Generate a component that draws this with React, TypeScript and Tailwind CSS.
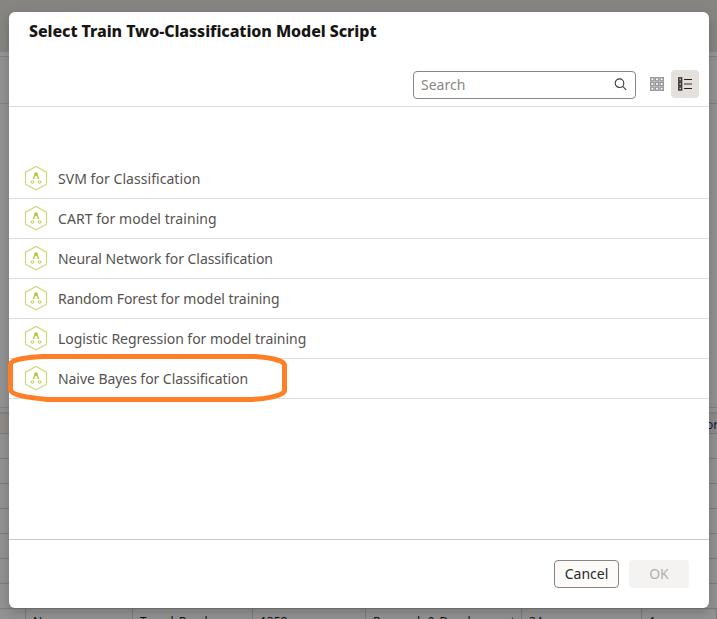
import React from "react";

const scripts = [
  { name: "SVM for Classification", spacing: "tracking-[0.05px]" },
  { name: "CART for model training", spacing: "tracking-[0.05px]" },
  { name: "Neural Network for Classification", spacing: "tracking-[-0.05px]" },
  { name: "Random Forest for model training", spacing: "tracking-[-0.05px]" },
  { name: "Logistic Regression for model training", spacing: "tracking-[-0.04px]" },
  { name: "Naive Bayes for Classification", spacing: "tracking-[-0.06px]" },
];

const gridRows = ["a", "b", "c", "d", "e", "f", "g"];

function ModelIcon() {
  return (
    <svg width="24" height="26" viewBox="0 0 24 26" fill="none" className="-mt-px shrink-0">
      <path d="M12 1.5 22.5 7.2V19.2L12 24.9 1.5 19.2V7.2Z" stroke="#c9db78" strokeWidth="1.2" />
      <path d="M11.2 10 9.2 14M12.8 10l2 4" stroke="#b5cf4b" strokeWidth="1.5" />
      <circle cx="12" cy="9.2" r="1.9" fill="#b0cc3c" />
      <circle cx="8.5" cy="17" r="1.3" stroke="#b5cf4b" />
      <circle cx="15.5" cy="17" r="1.3" stroke="#b5cf4b" />
      <path d="M12 13v1M12 16.5v1" stroke="#d5e49a" />
    </svg>
  );
}

function GridIcon() {
  return (
    <svg width="14" height="14" viewBox="0 0 14 14" fill="none" stroke="#98969a" strokeWidth="1.4">
      {[0.7, 5.4, 10.1].map((y) =>
        [0.7, 5.4, 10.1].map((x) => <rect key={`${x}-${y}`} x={x} y={y} width="3.2" height="3.2" />)
      )}
    </svg>
  );
}

function ListIcon() {
  return (
    <svg width="14" height="14" viewBox="0 0 14 14" fill="none" stroke="#3a3836" strokeWidth="1.5">
      {[0.9, 5.4, 9.9].map((y) => (
        <rect key={y} x="0.8" y={y} width="2.8" height="3.1" />
      ))}
      <path d="M6 2.5h8M6 11.5h8" stroke="#22201f" strokeWidth="1" />
      <path d="M6 7h8" stroke="#8a8784" strokeWidth="2" />
    </svg>
  );
}

function Backdrop() {
  return (
    <div className="flex h-[619px] w-full flex-col bg-[#929292] text-[12px] text-[#151515]">
      <div className="h-[52px] shrink-0 bg-[#878582]" />
      <div className="h-[5px] shrink-0 border-b border-[#7f7f7f] bg-[#969698]" />
      <div className="h-[47px] shrink-0 border-b border-[#808080]" />
      <div className="h-[304px] shrink-0 border-b border-[#808080]" />
      <div className="h-[4px] shrink-0" />
      <div className="h-[2px] shrink-0 bg-[#7e8186]" />
      <div className="flex h-[20px] shrink-0 items-center justify-end overflow-hidden border-b border-[#7d7d7d] bg-[#8e8b88] leading-none">
        <span className="w-[11px] whitespace-nowrap pt-[3px] text-[#0c1440]">or</span>
      </div>
      {gridRows.map((row) => (
        <div key={row} className="h-[25px] shrink-0 border-b border-[#7d7d7d]" />
      ))}
      <div className="flex h-[10px] shrink-0 overflow-hidden leading-[14px] *:shrink-0 *:overflow-hidden *:whitespace-nowrap *:border-r *:border-[#7a7a7a] *:pl-[7px] *:pt-[6px]">
        <span className="w-[26px]" />
        <span className="w-[107px]">Non</span>
        <span className="w-[120px]">Travel_Rarely</span>
        <span className="w-[113px]">1358</span>
        <span className="w-[156px]">Research &amp; Development</span>
        <span className="w-[120px]">24</span>
        <span className="w-[75px]">1</span>
      </div>
    </div>
  );
}

export default function App() {
  return (
    <div className="relative h-[619px] w-[717px] overflow-hidden font-['Noto_Sans','Open_Sans',sans-serif]">
      <Backdrop />
      <section
        role="dialog"
        className="absolute left-[9px] top-[12px] flex h-[596px] w-[700px] flex-col rounded-[6px] bg-white shadow-[0_4px_12px_rgba(0,0,0,0.2)]"
      >
        <header className="flex h-[95px] shrink-0 flex-col border-b border-[#dedede]">
          <h1 className="h-[58px] whitespace-nowrap pl-5 pt-[7px] text-[16px] font-extrabold leading-6 tracking-[-0.07px] text-[#161513]">
            Select Train Two-Classification Model Script
          </h1>
          <div className="flex items-start justify-end pr-[10px]">
            <label className="mr-[7px] mt-px flex h-7 w-[223px] items-center justify-between rounded-[4px] border border-[#8b8580] pl-[7px] pr-2">
              <span className="-mt-px text-[14px] text-[#8b8683]">Search</span>
              <svg width="13" height="13" viewBox="0 0 13 13" fill="none" stroke="#3b3937" strokeWidth="1.1" className="-mt-[2px]">
                <circle cx="5.5" cy="5.2" r="4.3" />
                <path d="m8.7 8.3 3.5 3.5" />
              </svg>
            </label>
            <div className="flex size-7 items-center justify-center">
              <GridIcon />
            </div>
            <div className="flex size-7 items-center justify-center rounded-[4px] bg-[#e4e1dd]">
              <ListIcon />
            </div>
          </div>
        </header>
        <main className="flex-1 pt-[52px]">
          <ul>
            {scripts.map((script) => (
              <li key={script.name} className="flex h-10 items-center border-b border-[#dedede] pl-[15px]">
                <ModelIcon />
                <span className={`ml-[10px] whitespace-nowrap text-[14px] text-[#55524f] ${script.spacing}`}>{script.name}</span>
              </li>
            ))}
          </ul>
        </main>
        <footer className="flex h-[69px] shrink-0 items-start justify-end gap-[10px] border-t border-[#cacaca] pr-5 pt-5 text-[14px] leading-[26px]">
          <button className="h-7 w-[65px] rounded-[4px] border border-[#8b8580] bg-[#fcfbfa] text-[#2b2927]">Cancel</button>
          <button className="h-7 w-[60px] rounded-[4px] bg-[#f4f3f2] text-[#b1afad]">OK</button>
        </footer>
      </section>
      <svg
        width="282"
        height="50"
        viewBox="0 0 282 50"
        fill="none"
        stroke="#ff7f27"
        strokeWidth="5"
        className="absolute left-[7px] top-[353px]"
      >
        <path d="M35 3.5H248C262 4.5 277 7 277.5 12V38C276 43 256 46.5 241 46.5H41C26 45 5 43 3.5 37V11C5 6 21 4.5 35 3.5Z" />
      </svg>
    </div>
  );
}
